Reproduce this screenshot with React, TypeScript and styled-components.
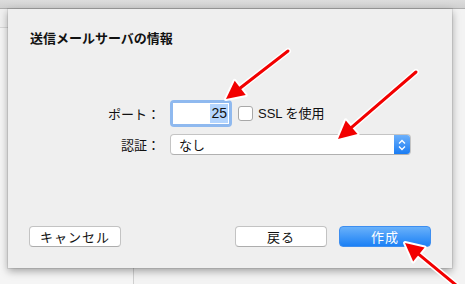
import React from "react";
import styled, { createGlobalStyle } from "styled-components";

const Global = createGlobalStyle`
  html, body { margin: 0; padding: 0; background: #f4f4f4; }
  body { font-family: "Noto Sans CJK JP", "Liberation Sans", sans-serif; }
`;

const Stage = styled.div`
  position: relative;
  width: 465px;
  height: 284px;
  overflow: hidden;
  display: flex;
  flex-direction: column;
  background: #f4f4f4;
`;

const Toolbar = styled.div`
  height: 8px;
  background: linear-gradient(#dcdcdc, #d0d0d0);
  border-bottom: 1px solid #adadad;
  flex-shrink: 0;
`;

const WindowBody = styled.div`
  flex: 1;
  display: flex;
`;

const Sidebar = styled.div`
  width: 133px;
  border-right: 1px solid #cfcfcf;
  background: #f5f5f5;
  display: flex;
  flex-direction: column;
`;

const SidebarHeader = styled.div`
  height: 18px;
  border-bottom: 1px solid #d8d8d8;
  background: #f0f0f0;
`;

const MainPane = styled.div`
  flex: 1;
  background: #f3f3f3;
`;

const Sheet = styled.div`
  position: absolute;
  left: 8px;
  top: 9px;
  width: 444px;
  height: 259px;
  background: #efefef;
  box-shadow: 0 3px 8px rgba(0, 0, 0, 0.35), 0 0 0 1px rgba(0, 0, 0, 0.08);
  box-sizing: border-box;
  padding: 20px 21px 21px 21px;
  display: flex;
  flex-direction: column;
  color: #111;
`;

const Title = styled.div`
  font-size: 13px;
  font-weight: 700;
  line-height: 17px;
  margin-left: 1px;
`;

const Form = styled.div`
  margin-top: 54px;
  display: grid;
  grid-template-columns: 131px auto;
  column-gap: 10px;
  row-gap: 7px;
  align-items: center;
`;

const Label = styled.div`
  font-size: 13px;
  text-align: right;
  line-height: 18px;
`;

const Inline = styled.div`
  display: flex;
  align-items: center;
  gap: 5px;
`;

const FocusRing = styled.div`
  width: 62px;
  height: 27px;
  box-sizing: border-box;
  border-radius: 4px;
  background: #8fb9ef;
  padding: 3px;
  display: flex;
`;

const TextField = styled.div`
  flex: 1;
  background: #fff;
  display: flex;
  justify-content: flex-end;
  align-items: center;
  padding-right: 1px;
  font-family: "Liberation Sans", Arial, sans-serif;
  font-size: 14px;
`;

const Selected = styled.span`
  background: #b4d5fe;
  padding: 1px 1px;
  line-height: 17px;
`;

const CheckBox = styled.div`
  width: 13px;
  height: 13px;
  border: 1px solid #a8a8a8;
  border-radius: 3px;
  background: #fff;
  margin-left: 1px;
`;

const CheckLabel = styled.span`
  font-size: 13px;
  line-height: 18px;
`;

const Latin = styled.span`
  font-family: "Liberation Sans", Arial, sans-serif;
`;

const Popup = styled.div`
  width: 241px;
  height: 21px;
  box-sizing: border-box;
  border: 1px solid #c4c4c4;
  border-bottom-color: #b0b0b0;
  border-radius: 4px;
  background: #fff;
  display: flex;
  align-items: stretch;
  overflow: hidden;
`;

const PopupText = styled.div`
  flex: 1;
  font-size: 13px;
  line-height: 19px;
  padding-left: 8px;
`;

const Stepper = styled.div`
  width: 16px;
  background: linear-gradient(#6cb0fb, #1a7cf3);
  display: flex;
  align-items: center;
  justify-content: center;
`;

const Spacer = styled.div`
  flex: 1;
`;

const ButtonRow = styled.div`
  display: flex;
  align-items: center;
`;

const Button = styled.div<{ $primary?: boolean }>`
  width: 92px;
  height: 21px;
  box-sizing: border-box;
  border-radius: 4px;
  font-size: 13px;
  display: flex;
  align-items: center;
  justify-content: center;
  letter-spacing: 1px;
  ${(p) =>
    p.$primary
      ? `
    background: linear-gradient(#69b1fa, #1b80f5);
    border: 1px solid #3d8ef0;
    color: #fff;
  `
      : `
    background: #fff;
    border: 1px solid #c3c3c3;
    border-bottom-color: #adadad;
    color: #111;
  `}
`;

const Gap = styled.div<{ $w: number }>`
  width: ${(p) => p.$w}px;
`;

const Overlay = styled.svg`
  position: absolute;
  left: 0;
  top: 0;
  pointer-events: none;
`;

function Arrow({ x1, y1, x2, y2 }: { x1: number; y1: number; x2: number; y2: number }) {
  const dx = x2 - x1;
  const dy = y2 - y1;
  const len = Math.hypot(dx, dy);
  const ux = dx / len;
  const uy = dy / len;
  const hl = 18;
  const hw = 9;
  const bx = x2 - ux * hl;
  const by = y2 - uy * hl;
  const px = -uy;
  const py = ux;
  const head = `${x2},${y2} ${bx + px * hw},${by + py * hw} ${bx - px * hw},${by - py * hw}`;
  return (
    <g>
      <line x1={x1} y1={y1} x2={bx} y2={by} stroke="#fff" strokeWidth={6} strokeLinecap="round" />
      <polygon points={head} fill="#fff" stroke="#fff" strokeWidth={4} strokeLinejoin="round" />
      <line x1={x1} y1={y1} x2={bx + ux * 2} y2={by + uy * 2} stroke="#f20000" strokeWidth={3} strokeLinecap="round" />
      <polygon points={head} fill="#f20000" />
    </g>
  );
}

export default function App() {
  return (
    <>
      <Global />
      <Stage>
        <Toolbar />
        <WindowBody>
          <Sidebar>
            <SidebarHeader />
          </Sidebar>
          <MainPane />
        </WindowBody>
        <Sheet>
          <Title>送信メールサーバの情報</Title>
          <Form>
            <Label>ポート：</Label>
            <Inline>
              <FocusRing>
                <TextField>
                  <Selected>25</Selected>
                </TextField>
              </FocusRing>
              <CheckBox />
              <CheckLabel>
                <Latin>SSL</Latin> を使用
              </CheckLabel>
            </Inline>
            <Label>認証：</Label>
            <Popup>
              <PopupText>なし</PopupText>
              <Stepper>
                <svg width="8" height="12" viewBox="0 0 8 12">
                  <path d="M1 4.5 L4 1.5 L7 4.5 M1 7.5 L4 10.5 L7 7.5" fill="none" stroke="#fff" strokeWidth="1.3" />
                </svg>
              </Stepper>
            </Popup>
          </Form>
          <Spacer />
          <ButtonRow>
            <Button>キャンセル</Button>
            <Spacer />
            <Button>戻る</Button>
            <Gap $w={12} />
            <Button $primary>作成</Button>
          </ButtonRow>
        </Sheet>
        <Overlay width="465" height="284" viewBox="0 0 465 284">
          <Arrow x1={288} y1={51} x2={226} y2={99} />
          <Arrow x1={416} y1={72} x2={338} y2={139} />
          <Arrow x1={462} y1={290} x2={405} y2={243} />
        </Overlay>
      </Stage>
    </>
  );
}
